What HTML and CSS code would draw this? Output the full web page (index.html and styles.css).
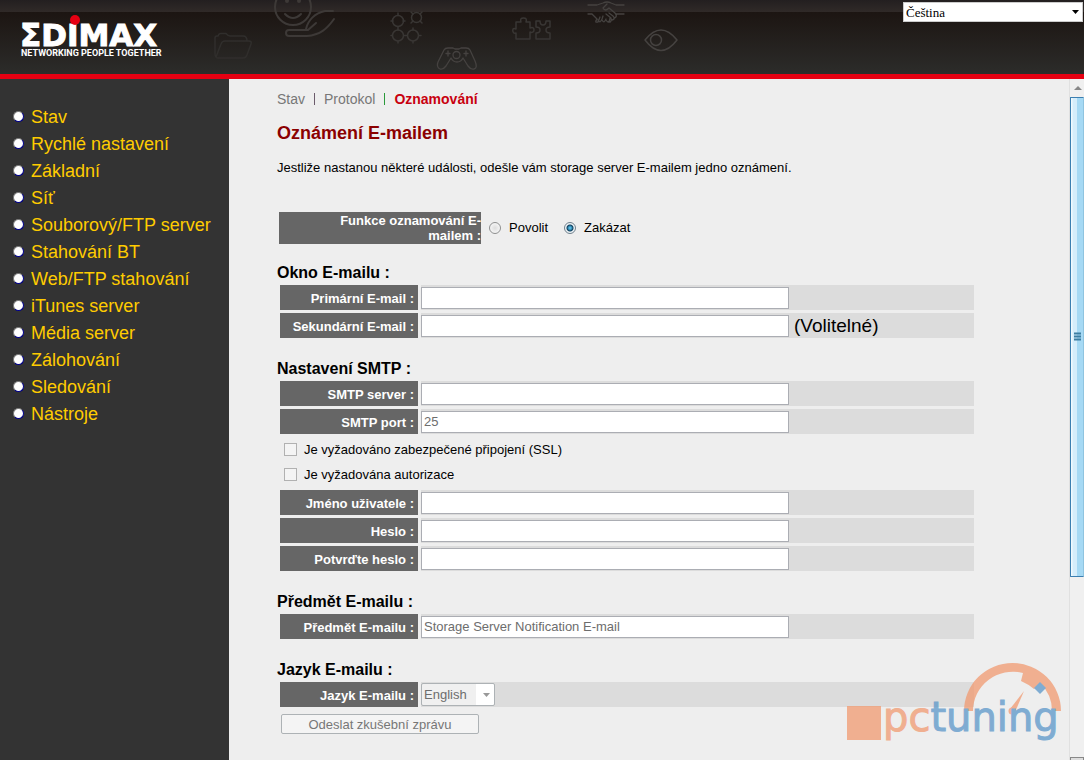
FILE: index.html
```html
<!DOCTYPE html>
<html lang="cs">
<head>
<meta charset="utf-8">
<title>Edimax – Oznamování</title>
<link rel="stylesheet" href="styles.css">
</head>
<body>
<header class="header">
  <svg class="header-art" width="700" height="74" viewBox="0 0 700 74" aria-hidden="true">
    <g fill="none" stroke="#393634" stroke-width="1.5" stroke-linejoin="round" stroke-linecap="round">
      <path stroke="#302e2c" d="M216 57Q215 56 215 54V38Q215 36 217 36H218Q219 33 221 33.500H226Q228 36 230 36H243Q247 36 247 41M216 57L221 44Q222 41 225 41H249Q252 41 251 44L247 55Q246 58 243 58H218Q216 58 216 57"/>
      <g stroke="#3d3937" stroke-width="2"><circle cx="293" cy="7" r="18"/><circle cx="287" cy="1" r="1"/><circle cx="299" cy="1" r="1"/><path d="M285 14Q293 22 301 14M333 11H325C315 13 308 20 306 29M316 23L308 30H289Q286 30 286 33T289 36H307C320 35 327 29 334 19"/></g>
      <g><circle cx="398" cy="21" r="5.500"/><circle cx="398" cy="35.500" r="5.500"/><circle cx="413" cy="35.500" r="5.500"/><circle cx="416.500" cy="17.500" r="5"/><path d="M398 13V15M391 21H393M403 21H405M398 27V30M391 35.500H392M404 35.500H407M419 35.500H421M398 41V43M413 41V43M413 28V30M411 12L413 14M422 12L420 14M411 23L413 21M422 23L420 21"/></g>
      <path stroke="#454240" stroke-width="1.300" d="M444 50Q445 48 448 48H453L455 49H459L461 48H466Q469 48 470 50L475 61Q478 68 474 69Q471 70 468 66L463 58Q461 62 457 62Q453 62 451 58L446 66Q443 70 440 69Q436 67 438 62ZM448 51V56M446 53.500H450M464 53.500H468M466 51V56"/>
      <circle stroke="#454240" stroke-width="1.300" cx="456.500" cy="55" r="3.500"/>
      <path d="M516 39V33C514 34 512 32 513 29Q514 28 516 29V22H521C520 19 521 18 523.500 18S527 19 526 22H530V28C533 27 534 28 534 30S532 33 530 32V39ZM536 21H540Q540 25 543 25T546 21H550V27Q546 27 546 30T550 33V39H536V33Q540 33 540 30T536 27Z"/>
      <path stroke="#454240" stroke-width="1.300" d="M588 5H597L603 3Q607 1 611 3L616 5H624M588 14H592L597 19Q594 23 598 22L600 17M598 20Q600 24 602 19L603 16M602 20Q604 24 606 19M606 20Q609 25 610 18M608 22Q612 23 611 18L606 14M612 20Q616 19 613 16L609 13M614 18Q618 17 615 13L609 8Q605 12 603 8L607 4M616 14H624"/>
      <path stroke="#454240" d="M645 40Q661 20 677 40Q661 61 645 40Z"/><circle stroke="#454240" cx="656" cy="40" r="5.500"/>
    </g>
  </svg>
  <svg class="logo" width="190" height="60" viewBox="0 0 190 60" role="img" aria-label="Edimax">
    <text class="logo-name" x="20" y="46">ΣDIMAX</text>
    <circle cx="75" cy="20" r="5" fill="#e60012"/>
    <text class="logo-tag" x="21" y="56">NETWORKING PEOPLE TOGETHER</text>
  </svg>
  <select class="lang" aria-label="Jazyk"><option>Čeština</option></select>
</header>
<div class="page">
  <nav class="sidebar">
    <ul class="menu">
      <li><a href="#">Stav</a></li>
      <li><a href="#">Rychlé nastavení</a></li>
      <li><a href="#">Základní</a></li>
      <li><a href="#">Síť</a></li>
      <li><a href="#">Souborový/FTP server</a></li>
      <li><a href="#">Stahování BT</a></li>
      <li><a href="#">Web/FTP stahování</a></li>
      <li><a href="#">iTunes server</a></li>
      <li><a href="#">Média server</a></li>
      <li><a href="#">Zálohování</a></li>
      <li><a href="#">Sledování</a></li>
      <li><a href="#">Nástroje</a></li>
    </ul>
  </nav>
  <main class="content">
    <nav class="tabs">
      <a href="#">Stav</a>
      <a href="#">Protokol</a>
      <a class="current" href="#">Oznamování</a>
    </nav>
    <h1 class="title">Oznámení E-mailem</h1>
    <p class="intro">Jestliže nastanou některé události, odešle vám storage server E-mailem jedno oznámení.</p>
    <form class="form">
      <div class="toggle" role="radiogroup" aria-labelledby="fn">
        <span class="toggle-label" id="fn">Funkce oznamování E-mailem :</span>
        <label class="option"><input class="radio" type="radio" name="notify">Povolit</label>
        <label class="option"><input class="radio" type="radio" name="notify" checked>Zakázat</label>
      </div>
      <section class="group">
        <h2>Okno E-mailu :</h2>
        <div class="row"><label for="mail1">Primární E-mail :</label><div class="cell"><input class="text" id="mail1" type="text"></div></div>
        <div class="row"><label for="mail2">Sekundární E-mail :</label><div class="cell"><input class="text" id="mail2" type="text"><span class="note">(Volitelné)</span></div></div>
      </section>
      <section class="group">
        <h2>Nastavení SMTP :</h2>
        <div class="row"><label for="server">SMTP server :</label><div class="cell"><input class="text" id="server" type="text"></div></div>
        <div class="row"><label for="port">SMTP port :</label><div class="cell"><input class="text" id="port" type="text" value="25"></div></div>
        <div class="checks">
          <label><input class="check" type="checkbox">Je vyžadováno zabezpečené připojení (SSL)</label>
          <label><input class="check" type="checkbox">Je vyžadována autorizace</label>
        </div>
        <div class="row"><label for="user">Jméno uživatele :</label><div class="cell"><input class="text" id="user" type="text"></div></div>
        <div class="row"><label for="pass">Heslo :</label><div class="cell"><input class="text" id="pass" type="password"></div></div>
        <div class="row"><label for="pass2">Potvrďte heslo :</label><div class="cell"><input class="text" id="pass2" type="password"></div></div>
      </section>
      <section class="group">
        <h2>Předmět E-mailu :</h2>
        <div class="row"><label for="subject">Předmět E-mailu :</label><div class="cell"><input class="text" id="subject" type="text" value="Storage Server Notification E-mail"></div></div>
      </section>
      <section class="group">
        <h2>Jazyk E-mailu :</h2>
        <div class="row"><label for="mlang">Jazyk E-mailu :</label><div class="cell"><select class="mail-lang" id="mlang" disabled><option>English</option></select></div></div>
        <button class="send" type="button" disabled>Odeslat zkušební zprávu</button>
      </section>
    </form>
  </main>
  <div class="scrollbar" aria-hidden="true">
    <svg class="arrow" width="14" height="18" viewBox="0 0 14 18"><path d="M4 11L8 7L12 11Z" fill="#888"/></svg>
    <div class="thumb"><svg width="8" height="10" viewBox="0 0 8 10"><path d="M1 1.500H8M1 4.500H8M1 7.500H8" stroke="#3d7fa3" stroke-width="2"/></svg></div>
    <div class="track"></div>
    <div class="arrow-down"></div>
  </div>
  <svg class="watermark" width="220" height="84" viewBox="0 0 220 84" role="img" aria-label="pctuning">
    <g fill="#f19a71">
      <path d="M0 46H34V80H0ZM117 51A48.500 48 0 0 1 214 51H205A40 39 0 0 0 193 23L187 29Q181 24 174 21L176 13A40 39 0 0 0 126 51Z"/>
      <path d="M177 31L168 52L163 49Z"/><circle cx="165" cy="51" r="3.500"/>
    </g>
    <path d="M193 22L199 28L193 34L187 28Z" fill="#5b96c9"/>
    <text class="mark" x="36" y="71"><tspan fill="#f19a71" stroke="#f19a71">pc</tspan><tspan fill="#5b96c9" stroke="#5b96c9">tuning</tspan></text>
  </svg>
</div>
</body>
</html>
```
FILE: styles.css
```css
* { box-sizing: border-box; }
body {
  margin: 0;
  min-height: 100vh;
  display: flex;
  flex-direction: column;
  background: #eee;
  color: #000;
  font-family: "Liberation Sans", Arial, sans-serif;
  font-size: 13px;
}
.header {
  position: relative;
  display: flex;
  justify-content: space-between;
  align-items: flex-start;
  height: 79px;
  border-bottom: 5px solid #e60012;
  background:
    linear-gradient(#231f20, #302a28) top / 100% 12px no-repeat,
    linear-gradient(#1c1512 12px, #2c2c2a);
}
.header-art { position: absolute; left: 0; top: 0; }
.logo { position: relative; }
.logo-name {
  font: bold 31px "DejaVu Sans", sans-serif;
  fill: #fff;
  stroke: #fff;
  stroke-width: 1px;
}
.logo-tag { font: bold 9px Roboto, sans-serif; fill: #fff; }
.lang {
  position: relative;
  appearance: none;
  width: 180px;
  height: 20px;
  margin: 2px 1px 0 0;
  padding: 0 2px;
  border: 1px solid #ccc;
  border-radius: 0;
  background: #fff url("data:image/svg+xml,%3Csvg xmlns='http://www.w3.org/2000/svg' width='7' height='4'%3E%3Cpath d='M0 0H7L3.5 4Z'/%3E%3C/svg%3E") right 3px center no-repeat;
  color: #000;
  font: 13px "Liberation Serif", serif;
}
.page {
  position: relative;
  flex: 1;
  display: flex;
}
.sidebar {
  flex: 0 0 229px;
  background: #333;
  padding: 24px 0 24px 13px;
}
.menu { list-style: none; margin: 0; padding: 0; }
.menu li {
  display: flex;
  align-items: center;
  gap: 7px;
  height: 27px;
}
.menu li::before {
  content: "";
  box-sizing: border-box;
  width: 11px;
  height: 11px;
  border: 1px solid;
  border-color: #777 #00008b #00008b #777;
  border-radius: 50%;
  background: #fff;
}
.menu a {
  padding-top: 1px;
  color: #fc0;
  font-size: 18px;
  text-decoration: none;
  white-space: nowrap;
}
.content { flex: 1; padding: 11px 48px 24px; }
.tabs { display: flex; font-size: 14px; line-height: 18px; }
.tabs a { color: #777; text-decoration: none; }
.tabs a + a::before {
  content: "";
  display: inline-block;
  width: 1px;
  height: 12px;
  margin: 0 9px -1px;
  background: #6b5b6b;
}
.tabs .current { color: #c8000f; font-weight: bold; }
.tabs .current::before { background: #2a9a3a; }
.title {
  margin: 14px 0 0;
  color: #8b0000;
  font-size: 18px;
  line-height: 22px;
}
.intro { margin: 16px 0 0; line-height: 16px; }
.form { max-width: 697px; padding-top: 35px; }
.toggle {
  display: flex;
  align-items: center;
  margin-left: 2px;
  height: 33px;
}
.toggle-label {
  width: 202px;
  padding: 1px 0 1px 24px;
  background: #666;
  color: #fff;
  font-weight: bold;
  line-height: 15px;
  text-align: right;
}
.option { display: flex; align-items: center; margin-left: 8px; }
.option + .option { margin-left: 16px; }
.radio {
  appearance: none;
  width: 12px;
  height: 12px;
  margin: 0 8px 0 0;
  border: 1px solid #8e8f8f;
  border-radius: 50%;
  background: radial-gradient(circle, #ddd, #fff);
}
.radio:checked {
  border-color: #6f808c;
  background: radial-gradient(circle, #4fb8e4 1px, #10415f 3px, #eef3f6 4px);
}
.group { padding-top: 18px; }
.toggle + .group { padding-top: 19px; }
.group h2 {
  margin: 0 0 2px;
  font-size: 16px;
  line-height: 20px;
}
.row { display: flex; gap: 3px; margin: 0 0 3px 3px; height: 25px; }
.row label {
  flex: 0 0 138px;
  padding-right: 4px;
  background: #666;
  color: #fff;
  font-weight: bold;
  line-height: 27px;
  text-align: right;
}
.cell { flex: 1; display: flex; align-items: center; gap: 5px; background: #dcdcdc; }
.text {
  flex: 0 1 368px;
  min-width: 0;
  height: 22px;
  padding: 0 2px;
  border: 1px solid #abadb3;
  background: #fff;
  color: #6d6d6d;
  font: inherit;
}
.note { font-size: 19px; }
.checks { display: grid; padding: 0 0 3px 7px; }
.checks label { display: flex; align-items: center; gap: 7px; height: 25px; }
.check {
  appearance: none;
  width: 13px;
  height: 13px;
  margin: 0;
  border: 1px solid #b1b1b1;
  background: #f4f4f4;
}
.mail-lang {
  appearance: none;
  width: 74px;
  height: 23px;
  padding: 0 2px;
  border: 1px solid #adb2b5;
  border-radius: 2px;
  background:
    url("data:image/svg+xml,%3Csvg xmlns='http://www.w3.org/2000/svg' width='7' height='4'%3E%3Cpath d='M0 0H7L3.5 4Z' fill='%23999'/%3E%3C/svg%3E") right 4px center no-repeat,
    linear-gradient(90deg, #f0f0f0 54px, #fff 54px);
  color: #6d6d6d;
  opacity: 1;
  font: inherit;
}
.send {
  display: block;
  width: 198px;
  height: 20px;
  margin: 7px 0 0 4px;
  padding: 0;
  border: 1px solid #adb2b5;
  border-radius: 2px;
  background: #f4f4f4;
  color: #777;
  font: inherit;
}
.scrollbar {
  flex: 0 0 14px;
  display: flex;
  flex-direction: column;
  background: #f0f0f0;
  border-left: 1px solid #e0e0e0;
}
.arrow { flex: none; }
.thumb {
  flex: 479;
  display: flex;
  align-items: center;
  justify-content: center;
  border: 1px solid #3c7fb1;
  border-right-color: #8fc4e0;
  border-radius: 1px;
  background: linear-gradient(90deg, #f0faff 1px, #d5edfb 2px, #d5edfb 6px, #a6d9f4 6px);
}
.track { flex: 181; }
.arrow-down { height: 3px; border: 1px solid #888; border-bottom: 0; background: #ddd; }
.watermark { position: absolute; right: 17px; bottom: 16px; opacity: .75; }
.mark { font: 40px "DejaVu Sans", sans-serif; stroke-width: 1px; }
```
